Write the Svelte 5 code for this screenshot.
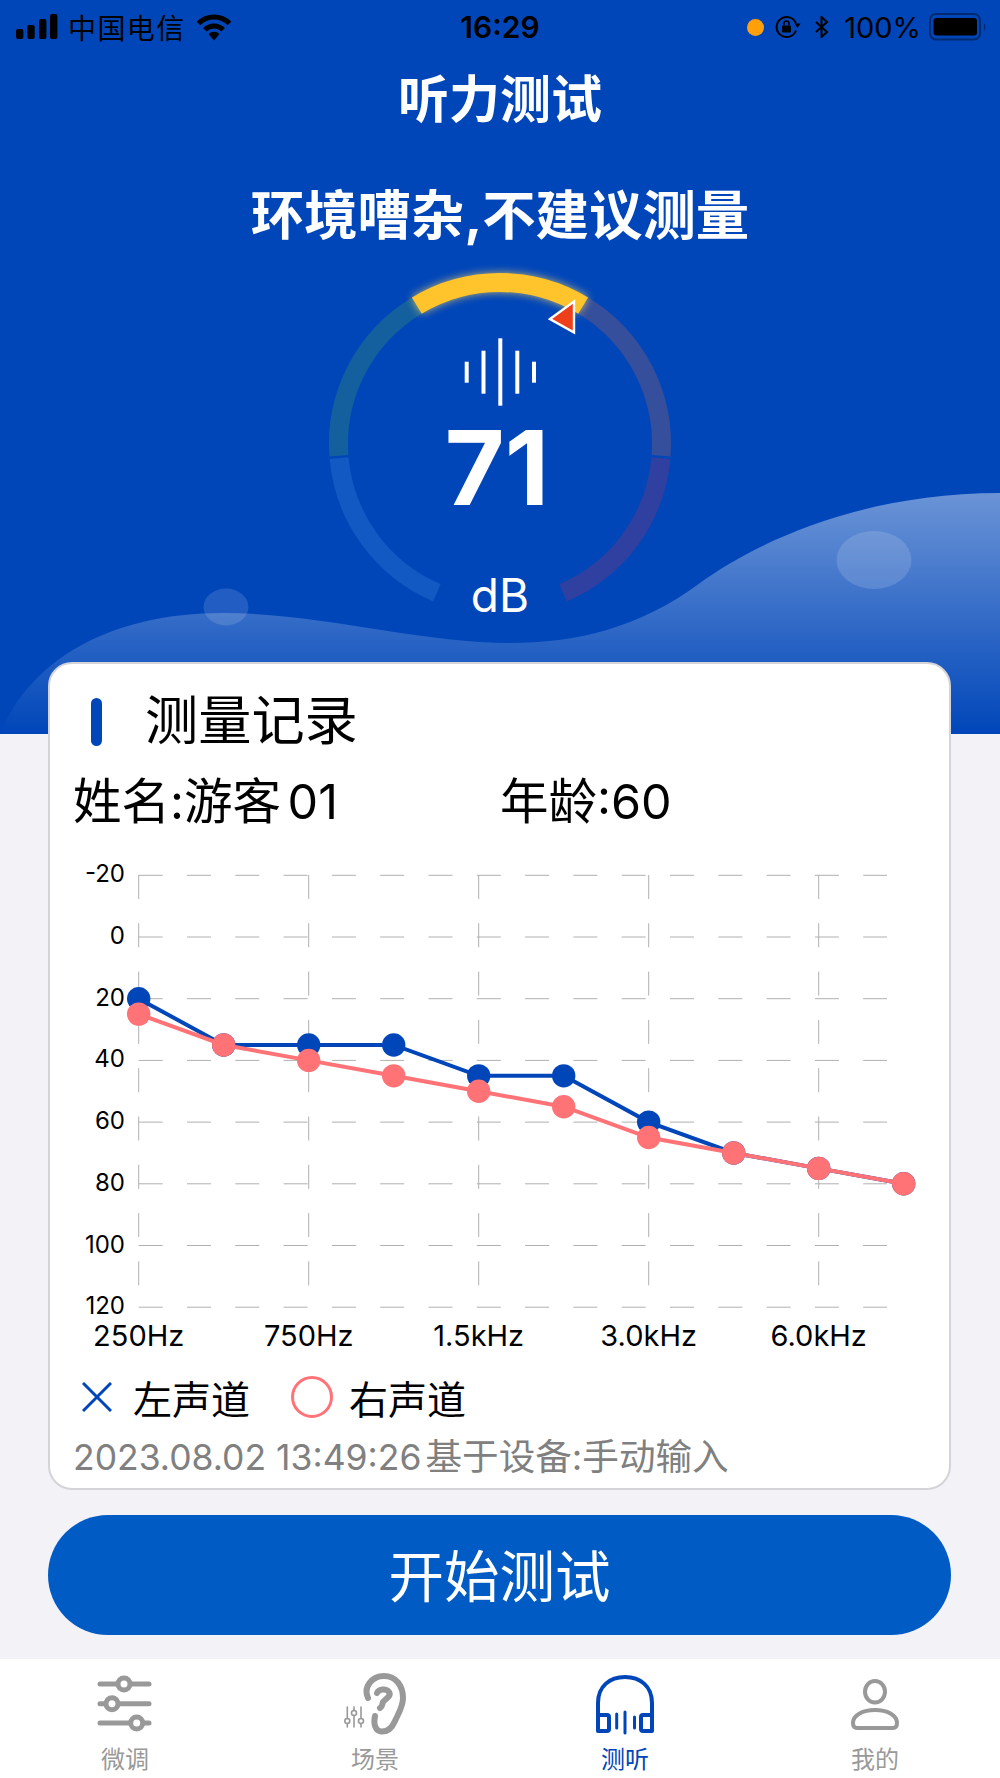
<script>
  const cx = 200;
  const cy = 194;
  const r = 161.5;

  function arc(from, to) {
    const rad = (a) => ((a - 90) * Math.PI) / 180;
    const x1 = cx + r * Math.cos(rad(from));
    const y1 = cy + r * Math.sin(rad(from));
    const x2 = cx + r * Math.cos(rad(to));
    const y2 = cy + r * Math.sin(rad(to));
    return `M${x1.toFixed(1)} ${y1.toFixed(1)} A${r} ${r} 0 0 1 ${x2.toFixed(1)} ${y2.toFixed(1)}`;
  }

  const segments = [
    { from: 31, to: 94.2, color: "#354f9c" },
    { from: 95, to: 157, color: "#2f40a0" },
    { from: 203, to: 265, color: "#1259c3" },
    { from: 265.8, to: 329, color: "#14609f" },
  ];
  const bars = [
    { x: 164.7, y: 111.7, h: 21 },
    { x: 181.5, y: 100.7, h: 43 },
    { x: 198.3, y: 88.3, h: 67.4 },
    { x: 215.3, y: 100.7, h: 43 },
    { x: 232, y: 111.7, h: 21 },
  ];

  const ticks = [-20, 0, 20, 40, 60, 80, 100, 120];
  const freqs = ["250Hz", "750Hz", "1.5kHz", "3.0kHz", "6.0kHz"];
  const left = [20, 35, 35, 35, 45, 45, 60, 70, 75, 80];
  const right = [25, 35, 40, 45, 50, 55, 65, 70, 75, 80];

  const px = (i) => 138.7 + 85 * i;
  const py = (v) => 937 + v * 3.085;
  const line = (vals) => vals.map((v, i) => `${px(i)},${py(v)}`).join(" ");

  const tabs = [
    { name: "微调", id: "tune" },
    { name: "场景", id: "scene" },
    { name: "测听", id: "test", active: true },
    { name: "我的", id: "me" },
  ];
</script>

<div class="page">
  <header class="hero">
    <svg class="wave" width="1000" height="734" viewBox="0 0 1000 734" aria-hidden="true">
      <defs>
        <linearGradient id="waveFill" gradientUnits="userSpaceOnUse" x1="0" y1="493" x2="0" y2="734">
          <stop offset="0" stop-color="#fff" stop-opacity="0.42" />
          <stop offset="1" stop-color="#fff" stop-opacity="0" />
        </linearGradient>
      </defs>
      <path
        d="M0 734 C30 660 110 613 223 613 C320 613 420 643 510 643 C575 643 640 628 700 583 C745 550 850 493 1000 493 V734 Z"
        fill="url(#waveFill)"
      />
      <ellipse cx="874" cy="560" rx="37.5" ry="29" fill="#fff" fill-opacity="0.14" />
      <ellipse cx="226" cy="607" rx="22.5" ry="18.5" fill="#fff" fill-opacity="0.13" />
    </svg>

    <div class="status">
      <div class="status-left">
        <svg width="42" height="26" viewBox="0 0 42 26" aria-hidden="true">
          <rect x="0" y="15" width="7.4" height="10" rx="2" />
          <rect x="11.3" y="11" width="7.4" height="14" rx="2" />
          <rect x="23" y="5" width="7.4" height="20" rx="2" />
          <rect x="34" y="0" width="7.4" height="25" rx="2" />
        </svg>
        <span class="carrier">中国电信</span>
        <svg width="36" height="27" viewBox="0 0 36 27" aria-hidden="true">
          <path d="M2.5 9.5 A22 22 0 0 1 33.5 9.5" class="wifi" />
          <path d="M8.8 15.8 A13 13 0 0 1 27.2 15.8" class="wifi" />
          <path d="M12.5 20 A8 8 0 0 1 23.5 20 L18 26.5 Z" />
        </svg>
      </div>
      <span class="time">16:29</span>
      <div class="status-right">
        <span class="dot"></span>
        <svg width="26" height="22" viewBox="0 0 26 22" aria-hidden="true">
          <path d="M21 14.5 A10 10 0 1 1 21 7.5" class="thin" />
          <path d="M19.5 7.5 L25.5 7.5 L22.5 12 Z" />
          <rect x="7" y="9.5" width="9" height="7" rx="1" />
          <path d="M9 9.5 V7.5 A2.5 2.5 0 0 1 14 7.5 V9.5" class="lock" />
        </svg>
        <svg class="bt" width="14" height="22" viewBox="0 0 14 22" aria-hidden="true">
          <path d="M1 6 L12 16 L6.5 21 V1 L12 6 L1 16" class="thin" />
        </svg>
        <span class="pct">100%</span>
        <svg class="battery" width="59" height="28" viewBox="0 0 59 28" aria-hidden="true">
          <rect x="1" y="1" width="50" height="25.5" rx="6" fill="none" stroke="#000" stroke-opacity="0.4" stroke-width="2" />
          <rect x="4.5" y="5" width="43.5" height="17.5" rx="3" />
          <path d="M55 10 Q58 13.5 55 18 Z" fill-opacity="0.4" />
        </svg>
      </div>
    </div>

    <h1>听力测试</h1>
    <p class="warn">环境嘈杂,不建议测量</p>

    <svg class="gauge" width="400" height="380" viewBox="0 0 400 380" aria-label="gauge">
      {#each segments as s}
        <path d={arc(s.from, s.to)} fill="none" stroke={s.color} stroke-width="19" />
      {/each}
      <path class="active-arc" d={arc(-31, 31)} fill="none" stroke="#ffc42c" stroke-width="19" />
      <polygon points="250,69 274,51.5 274,82.5" fill="#ee3f1b" stroke="#fff" stroke-width="2.4" />
      {#each bars as b}
        <rect x={b.x} y={b.y} width="4" height={b.h} fill="#fff" />
      {/each}
      <text class="value" x="197" y="255" text-anchor="middle">71</text>
      <text class="unit" x="200" y="362" text-anchor="middle">dB</text>
    </svg>
  </header>

  <section class="card">
    <div class="card-head">
      <span class="pill"></span>
      <h2>测量记录</h2>
    </div>
    <div class="info">
      <span class="name">姓名:游客 01</span>
      <span>年龄:60</span>
    </div>

    <svg class="chart" width="899" height="510" viewBox="50 850 899 510" aria-label="chart">
      {#each ticks as t}
        <line class="grid" x1="138.7" x2="887" y1={py(t)} y2={py(t)} stroke-dasharray="24 24.3" />
        <text class="tick" x="125" y={py(t) + 7} text-anchor="end">{t}</text>
      {/each}
      {#each freqs as f, i}
        <line class="grid" x1={px(i * 2)} x2={px(i * 2)} y1="875" y2="1307" stroke-dasharray="24 24.3" />
        <text class="freq" x={px(i * 2)} y="1346" text-anchor="middle">{f}</text>
      {/each}
      <polyline points={line(left)} fill="none" stroke="#0046b9" stroke-width="4" />
      {#each left as v, i}
        <circle cx={px(i)} cy={py(v)} r="11.7" fill="#0046b9" />
      {/each}
      <polyline points={line(right)} fill="none" stroke="#ff7276" stroke-width="4" />
      {#each right as v, i}
        <circle cx={px(i)} cy={py(v)} r="11.7" fill="#ff7276" />
      {/each}
    </svg>

    <div class="legend">
      <svg width="30" height="30" viewBox="0 0 30 30" aria-hidden="true">
        <path d="M1 1 L29 29 M29 1 L1 29" stroke="#0046b9" stroke-width="3" fill="none" />
      </svg>
      <span class="legend-left">左声道</span>
      <svg width="42" height="42" viewBox="0 0 42 42" aria-hidden="true">
        <circle cx="21" cy="21" r="19.5" fill="none" stroke="#ff7276" stroke-width="3" />
      </svg>
      <span class="legend-right">右声道</span>
    </div>
    <p class="meta"><span class="stamp">2023.08.02 13:49:26</span><span class="device">基于设备:手动输入</span></p>
  </section>

  <button class="start">开始测试</button>

  <nav class="tabs">
    {#each tabs as tab}
      <div class="tab" class:active={tab.active}>
        <svg width="100" height="70" viewBox="0 0 100 70" aria-hidden="true">
          {#if tab.id === "tune"}
            <g class="icon" stroke-width="5">
              <path d="M20 19 H69" />
              <path d="M20 38.7 H69" />
              <path d="M20 58 H69" />
              <circle cx="44" cy="19" r="6" fill="#fff" stroke-width="5" />
              <circle cx="32" cy="38.7" r="6" fill="#fff" stroke-width="5" />
              <circle cx="56.7" cy="58" r="6" fill="#fff" stroke-width="5" />
            </g>
          {:else if tab.id === "scene"}
            <g class="icon" stroke-width="6">
              <path d="M38 33 C33 22 42 11 54 11 C66 11 73 21 73 33 C73 42 68 49 65 56 C62 63 57 67 51 66.5 C46 66 43 60 45 51" />
              <path d="M47 28 C49 24 56 23 59 27 C62 31 55 34 53 37 C52 39 53 41 50 43" />
            </g>
            <g class="icon" stroke-width="1.6">
              <path d="M17.3 42 V53.5 M17.3 58.5 V62" />
              <path d="M24 42 V45.5 M24 50.5 V62" />
              <path d="M31 42 V53.5 M31 58.5 V62" />
              <circle cx="17.3" cy="56" r="2.5" />
              <circle cx="24" cy="48" r="2.5" />
              <circle cx="31" cy="56" r="2.5" />
            </g>
          {:else if tab.id === "test"}
            <g class="icon" stroke-width="4">
              <path d="M18 50 V38 C18 21 30 12 45 12 C60 12 72 21 72 38 V50" />
              <path d="M18 50 H27 Q29 50 29 52 V64 Q29 66 27 66 H18 Z" />
              <path d="M72 50 H63 Q61 50 61 52 V64 Q61 66 63 66 H72 Z" />
            </g>
            <g class="icon" stroke-width="3">
              <path d="M36.7 49 V63" />
              <path d="M45 47 V68" />
              <path d="M54.5 52 V63" />
            </g>
          {:else}
            <g class="icon" stroke-width="4">
              <ellipse cx="45" cy="26.7" rx="10" ry="10.7" />
              <path d="M23 58 C23 50 33 45 45 45 C57 45 67 50 67 58 Q67 63 63 63 H27 Q23 63 23 58 Z" />
            </g>
          {/if}
        </svg>
        <span>{tab.name}</span>
      </div>
    {/each}
  </nav>
</div>

<style>
  :global(body) {
    margin: 0;
    background: #f2f2f7;
  }
  .page {
    width: 1000px;
    height: 1778px;
    overflow: hidden;
    font-family: Inter, "Noto Sans CJK SC", sans-serif;
    color: #000;
  }
  .hero {
    position: relative;
    height: 734px;
    background: #0046b9;
    display: flex;
    flex-direction: column;
    align-items: center;
  }
  .wave {
    position: absolute;
    left: 0;
    top: 0;
  }
  .status {
    position: relative;
    width: 100%;
    height: 54px;
    display: grid;
    grid-template-columns: 1fr auto 1fr;
    align-items: center;
    font-size: 28px;
    box-sizing: border-box;
  }
  .status-left {
    display: flex;
    align-items: center;
    padding-left: 16px;
    gap: 10px;
  }
  .carrier {
    letter-spacing: 1.4px;
  }
  .status-right {
    display: flex;
    align-items: center;
    justify-content: flex-end;
    padding-right: 12px;
    gap: 0;
  }
  .status-right svg {
    margin-left: 11px;
  }
  .status-right .bt {
    margin-left: 14px;
  }
  .status-right .battery {
    margin-left: 8px;
  }
  .pct {
    margin-left: 15px;
    font-size: 29px;
  }
  .dot {
    width: 17px;
    height: 17px;
    border-radius: 50%;
    background: #ff9f0a;
  }
  .time {
    font-size: 30px;
    font-weight: 600;
  }
  .wifi {
    fill: none;
    stroke: #000;
    stroke-width: 5;
  }
  .thin {
    fill: none;
    stroke: #000;
    stroke-width: 2;
  }
  .lock {
    fill: none;
    stroke: #000;
    stroke-width: 1.6;
  }
  h1 {
    position: relative;
    margin: 0;
    height: 86px;
    padding-top: 5px;
    box-sizing: border-box;
    line-height: 81px;
    font-size: 51px;
    font-weight: 700;
    color: #fff;
  }
  .warn {
    position: relative;
    margin: 41px 0 0;
    height: 69px;
    line-height: 70px;
    font-size: 53.4px;
    font-weight: 700;
    color: #fff;
  }
  .gauge {
    position: relative;
    display: block;
  }
  .active-arc {
    filter: drop-shadow(0 0 4px rgba(255, 214, 90, 0.75));
  }
  .value {
    font-size: 103px;
    font-weight: 700;
    fill: #fff;
  }
  .unit {
    font-size: 46px;
    fill: #fff;
  }
  .card {
    position: relative;
    margin: -72px 49px 0 48px;
    background: #fff;
    border: 2px solid #d4d4d8;
    border-radius: 24px;
    padding-bottom: 6px;
  }
  .card-head {
    height: 108px;
    display: flex;
    align-items: center;
    padding-left: 41px;
    gap: 43px;
  }
  .pill {
    width: 11px;
    height: 48px;
    margin-top: 8px;
    border-radius: 6px;
    background: #0046b9;
  }
  h2 {
    margin: 0 0 4px;
    font-size: 53.2px;
    font-weight: 400;
  }
  .info {
    height: 56px;
    display: flex;
    align-items: center;
    padding: 0 0 4px 23px;
    box-sizing: border-box;
    font-size: 48.5px;
  }
  .name {
    width: 427px;
    word-spacing: -7px;
  }
  .chart {
    display: block;
    margin-top: 22px;
  }
  .grid {
    stroke: #b0b0b0;
    stroke-width: 1;
  }
  .tick {
    font-size: 24px;
  }
  .freq {
    font-size: 29px;
  }
  .legend {
    height: 56px;
    margin-top: 10px;
    padding: 0 0 2px 32px;
    box-sizing: border-box;
    display: flex;
    align-items: center;
    font-size: 39px;
  }
  .legend-left {
    margin-left: 21px;
    margin-right: 41px;
  }
  .legend-right {
    margin-left: 16px;
  }
  .meta {
    margin: 6px 0 0;
    height: 50px;
    line-height: 50px;
    padding-left: 23px;
    font-size: 35.5px;
    color: #808080;
  }
  .device {
    margin-left: 4px;
    font-size: 36.6px;
  }
  .start {
    display: block;
    width: 903px;
    height: 120px;
    margin: 25px 0 0 48px;
    padding: 0 0 4px;
    border: 0;
    border-radius: 60px;
    background: #005bc5;
    color: #fff;
    font-family: inherit;
    font-size: 55.5px;
  }
  .tabs {
    margin-top: 24px;
    height: 119px;
    display: grid;
    grid-template-columns: repeat(4, 250px);
    background: #fff;
  }
  .tab {
    display: flex;
    flex-direction: column;
    align-items: center;
    padding-top: 6px;
    color: #999;
    font-size: 24px;
    line-height: 34px;
    --icon: #999;
  }
  .tab.active {
    color: #0046b9;
    --icon: #0046b9;
  }
  .tab svg {
    margin: 0 0 8px 10px;
  }
  .icon {
    fill: none;
    stroke: var(--icon);
    stroke-linecap: round;
    stroke-linejoin: round;
  }
</style>
